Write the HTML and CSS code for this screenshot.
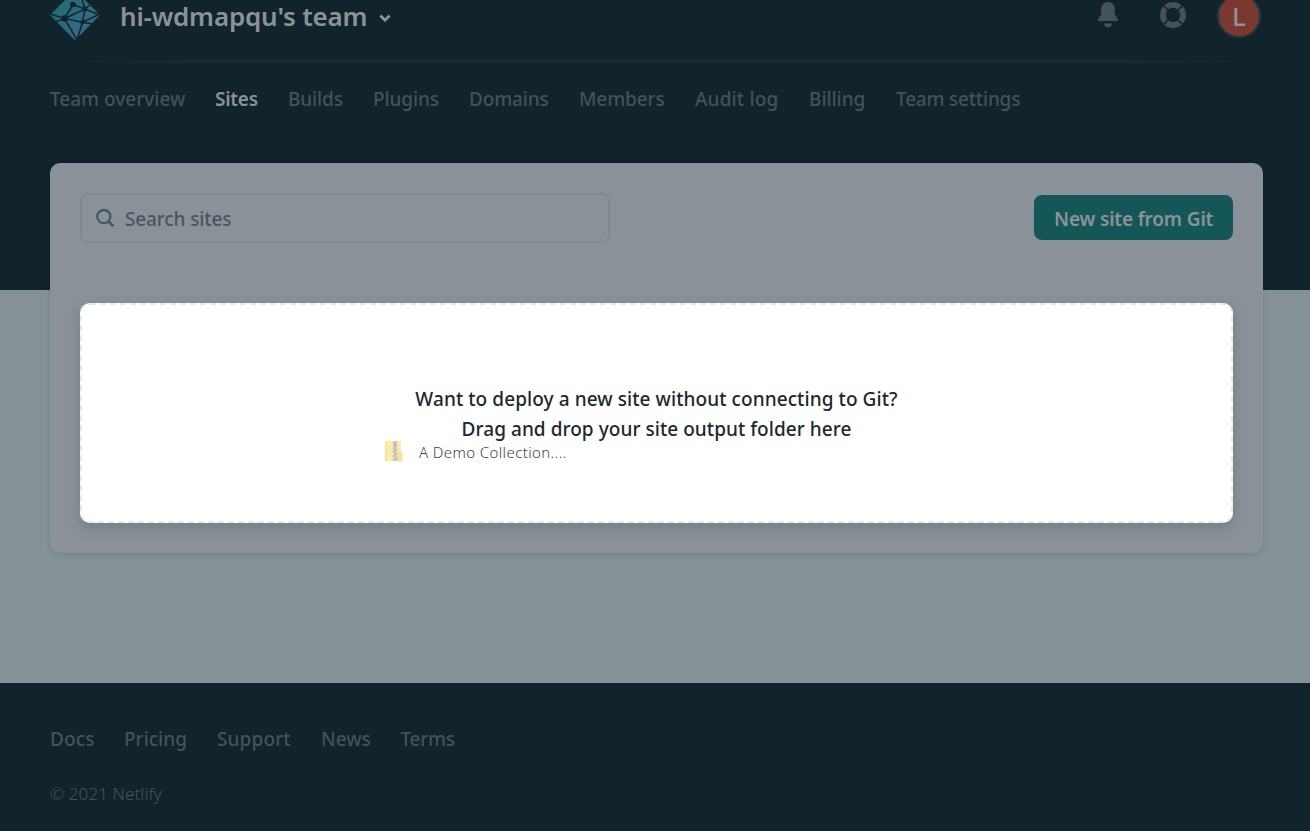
FILE: index.html
```html
<!DOCTYPE html>
<html lang="en">
<head>
<meta charset="utf-8">
<title>Sites | hi-wdmapqu's team</title>
<link rel="stylesheet" href="styles.css">
</head>
<body>
<header class="top">
  <div class="topbar">
    <svg class="logo" width="50" height="50" viewBox="0 0 50 50">
      <defs><linearGradient id="mark" x1="0" y1=".2" x2=".7" y2="1"><stop offset="0" stop-color="#206d72"/><stop offset=".45" stop-color="#296c79"/><stop offset="1" stop-color="#366a8a"/></linearGradient></defs>
      <path d="M25 0 50 25 26.500 48.800Q25 50.500 23.500 48.800L0 25Z" fill="url(#mark)"/>
      <g stroke="#11242b" stroke-width="1.500" fill="none">
        <path d="M0 24 14.500 28.500 5 32M14.500 28.500 27 50M14.500 28.500 32.500 32.200 43 34M14.500 28.500 35 19 50 25M14.500 28.500 23 14.500 35 19 32.500 32.200 27 50M32.500 32.200 50 24M35 19 41 14M35 19 31 6"/>
      </g>
      <g fill="#11242b"><circle cx="14.500" cy="28.500" r="3.200"/><circle cx="35" cy="19" r="2.400"/><circle cx="32.500" cy="32.200" r="2.200"/><circle cx="23" cy="14.500" r="2.800"/></g>
    </svg>
    <div class="team"><span>hi-wdmapqu's team</span>
      <svg width="12" height="9" viewBox="0 0 12 9"><path d="M1.400 1.500 6 6.300 10.600 1.500" fill="none" stroke="#8a9399" stroke-width="2.800"/></svg>
    </div>
    <div class="tools">
      <svg class="bell" width="20" height="26" viewBox="0 0 20 26" fill="#455259"><path d="M10 0c4.200 0 6.800 3.200 6.800 7.500v4.200c0 2 3.200 4 3.200 6.300 0 .6-.4 1-1 1H1c-.6 0-1-.4-1-1 0-2.300 3.200-4.300 3.200-6.300V7.500C3.200 3.200 5.800 0 10 0ZM6 21.500h8C13.800 24 12 25.500 10 25.500S6.200 24 6 21.500Z"/></svg>
      <svg class="ring" width="26" height="26" viewBox="0 0 26 26"><circle cx="13" cy="13" r="10.100" fill="none" stroke="#455259" stroke-width="5.800"/><path d="m3 3 6 6M17 17l6 6M23 3l-6 6M9 17l-6 6" stroke="#11242b" stroke-width="1.600"/></svg>
      <div class="avatar">L</div>
    </div>
  </div>
  <div class="rule"></div>
  <nav class="nav">
    <a class="n1">Team overview</a><a class="n2 active">Sites</a><a class="n3">Builds</a><a class="n4">Plugins</a><a class="n5">Domains</a><a class="n6">Members</a><a class="n7">Audit log</a><a class="n8">Billing</a><a class="n9">Team settings</a>
  </nav>
</header>
<main class="card">
  <div class="controls">
    <div class="search">
      <svg width="20" height="20" viewBox="0 0 20 20" fill="none" stroke="#47575d"><circle cx="8.800" cy="8.600" r="6.600" stroke-width="2.300"/><path d="m13.300 13.200 5 5" stroke-width="2.700"/></svg>
      <span>Search sites</span>
    </div>
    <div class="button"><span>New site from Git</span></div>
  </div>
  <section class="drop">
    <svg class="dash" width="1153" height="220"><rect x="1" y="1" width="1151" height="218" rx="9" fill="none" stroke="#e6e9e9" stroke-width="2" stroke-dasharray="6 4"/></svg>
    <p><span class="d1">Want to deploy a new site without connecting to Git?</span></p>
    <p><span class="d2">Drag and drop your site output folder here</span></p>
    <div class="dragged">
      <svg width="18" height="21" viewBox="0 0 18 21"><path d="M0 0h16v20H0z" fill="#fdeba6"/><path d="M0 1h2v19H0z" fill="#fbe394"/><path d="M13 12h4v8h-4z" fill="#fae693" stroke="#eed37c" stroke-width=".7"/><path d="M7.500 0h5v20h-5z" fill="#dcdcd2"/><path d="M9 1h2M8.500 3h3M9 5h3M8.500 7h2M9 9h3M8.500 11h2M10 13h2M8.500 15h2M10 17h2M8.500 19h3" stroke="#9b9fa0" stroke-width="1"/></svg>
      <span class="file">A Demo Collection....</span>
    </div>
  </section>
</main>
<footer class="footer">
  <div class="links"><a class="f1">Docs</a><a class="f2">Pricing</a><a class="f3">Support</a><a class="f4">News</a><a class="f5">Terms</a></div>
  <div class="copy"><span>© 2021 Netlify</span></div>
</footer>
</body>
</html>
```
FILE: styles.css
```css
* { box-sizing: border-box; }
body {
  margin: 0;
  height: 831px;
  overflow: hidden;
  display: flex;
  flex-direction: column;
  background: #849197;
  color: #455259;
  font: 500 19px/30px "Noto Sans", "Open Sans", sans-serif;
}
p { margin: 0; }
span, a { white-space: nowrap; }
svg { display: block; flex: none; }
.top { height: 290px; flex: none; background: #11242b; padding: 0 50px; }
.topbar { height: 60px; display: flex; align-items: flex-start; }
.logo { margin-top: -10px; }
.team { display: flex; align-items: center; gap: 12px; margin: -2px 0 0 20px; height: 36px; color: #8a9399; font-size: 26px; font-weight: 600; letter-spacing: -.2px; }
.team svg { margin-top: 4px; }
.tools { display: flex; margin-left: auto; align-items: flex-start; }
.bell { margin-top: 2px; }
.ring { margin: 2px 30px 0 42px; }
.avatar { width: 44px; height: 44px; margin: -6px -1px 0 1px; border: 2px solid #263941; border-radius: 50%; background: #7b382f; color: #8a9399; font-size: 26px; line-height: 41px; text-align: center; }
.rule { height: 3px; background: linear-gradient(90deg, transparent 2%, #1b2d34 12%, #1b2d34 88%, transparent 99%); }
.nav { display: flex; gap: 30px; padding-top: 21px; }
.active { color: #8a9399; font-weight: 600; }
.nav .n1 { width: 135px; }
.nav .n2 { width: 43px; letter-spacing: -.25px; }
.nav .n3 { width: 55px; letter-spacing: -.15px; }
.nav .n4 { width: 66px; letter-spacing: -.1px; }
.nav .n5 { width: 80px; letter-spacing: -.15px; }
.nav .n6 { width: 86px; letter-spacing: -.1px; }
.nav .n7 { width: 84px; letter-spacing: .15px; }
.nav .n8 { width: 57px; letter-spacing: -.05px; }
.nav .n9 { letter-spacing: -.2px; }
.card { width: 1213px; height: 390px; flex: none; margin: -127px 0 0 50px; padding: 30px; border-radius: 10px; background: #8a9198; box-shadow: 0 2px 5px rgba(14,30,37,.13); }
.controls { display: flex; justify-content: space-between; align-items: flex-start; height: 110px; }
.search { display: flex; align-items: center; width: 530px; height: 50px; padding: 0 13px; gap: 10px; border: 2px solid #7f8a90; border-radius: 8px; color: #47575d; letter-spacing: -.13px; }
.search span { margin-top: 2px; }
.button { width: 199px; height: 45px; margin-top: 2px; padding: 9px 20px; border-radius: 8px; background: #155757; color: #8a9399; font-weight: 600; letter-spacing: -.15px; }
.drop { position: relative; height: 220px; padding-top: 81px; border-radius: 10px; background: #fff; box-shadow: 0 5px 12px rgba(92,112,114,.5); color: #1a292f; text-align: center; }
.d1 { letter-spacing: .08px; }
.d2 { letter-spacing: .05px; }
.dash { position: absolute; inset: 0; }
.dragged { position: absolute; left: 305px; top: 138px; display: flex; gap: 16px; color: #444; font-size: 15px; font-weight: 300; line-height: 23px; letter-spacing: .38px; }
.footer { height: 148px; flex: none; margin-top: auto; padding: 41px 50px 0; background: #11242b; }
.links { display: flex; gap: 30px; }
.links .f1 { width: 44px; letter-spacing: .1px; }
.links .f2 { width: 63px; }
.links .f3 { width: 74px; letter-spacing: .12px; }
.links .f4 { width: 49.500px; }
.links .f5 { letter-spacing: -.25px; }
.copy { margin-top: 25px; font-size: 17px; font-weight: 350; letter-spacing: .1px; }
```
